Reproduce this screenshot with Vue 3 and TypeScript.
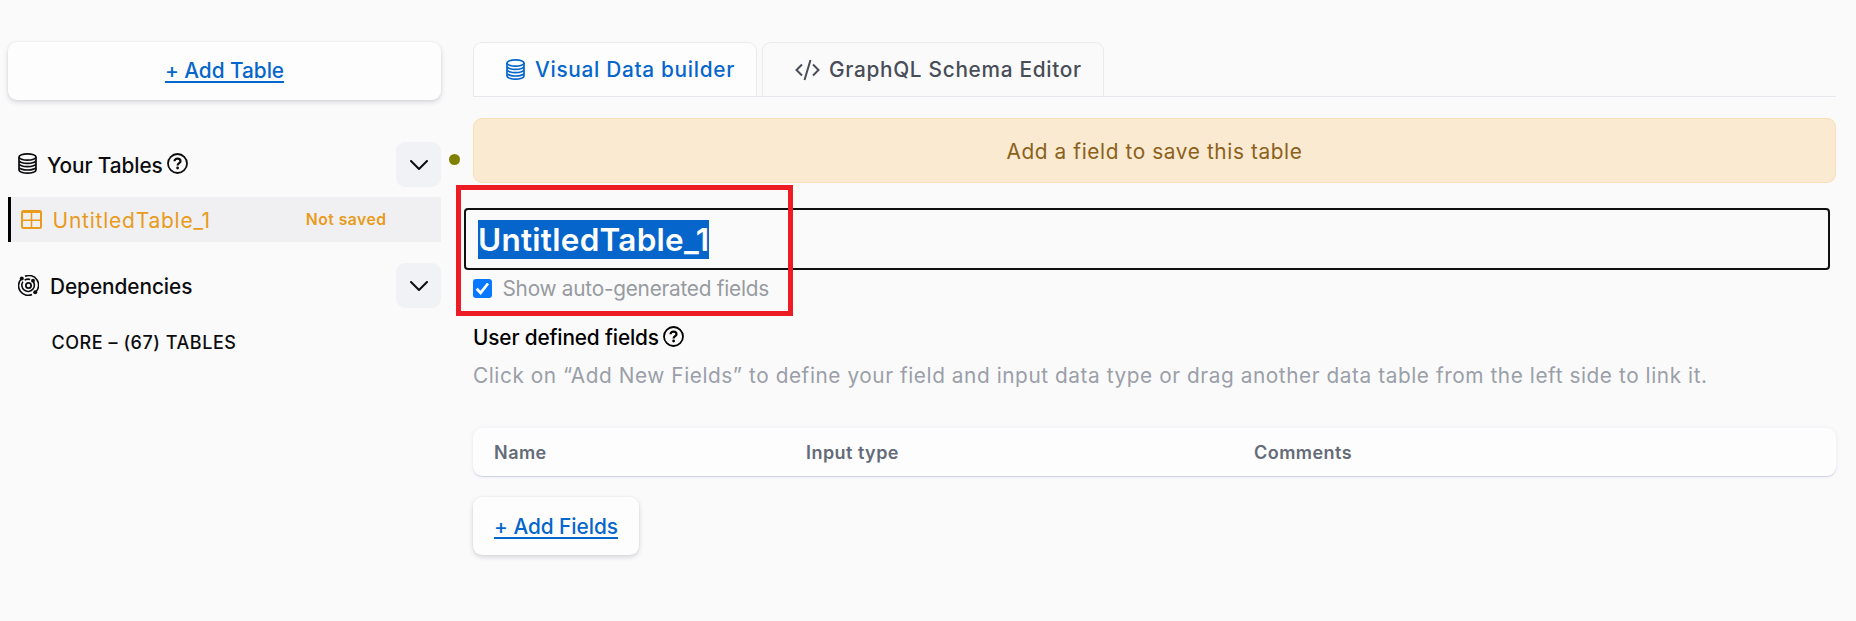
<script setup lang="ts">
import { ref } from 'vue'

const tableName = ref('UntitledTable_1')
const showAuto = ref(true)
const columns = ['Name', 'Input type', 'Comments']
</script>

<template>
  <div class="page">
    <aside class="sidebar">
      <button class="card-btn add-table"><span class="t-addtable">+ Add Table</span></button>
      <div class="group">
        <svg class="i-db" viewBox="0 0 19 21"><g fill="none" stroke="currentColor" stroke-width="1.7"><ellipse cx="9.5" cy="4" rx="8.5" ry="3.1" /><path d="M1 4v13c0 1.7 3.8 3.1 8.5 3.1S18 18.700 18 17V4M1 7.300c0 1.700 3.800 3.100 8.500 3.100S18 9 18 7.300M1 10.600c0 1.700 3.800 3.100 8.500 3.100S18 12.300 18 10.600M1 13.900c0 1.700 3.800 3.100 8.500 3.100S18 15.600 18 13.900" /></g></svg>
        <span class="label t-your">Your Tables</span>
        <svg class="i-help" viewBox="0 0 21 21"><g fill="none" stroke="currentColor"><circle cx="10.500" cy="10.500" r="9.500" stroke-width="1.800" /><path d="M7.500 8.200c0-1.700 1.300-2.500 3-2.500s3 1 3 2.500c0 1.900-2.900 2-2.900 4.200" stroke-width="2.200" /></g><circle cx="10.600" cy="15" r="1.400" fill="currentColor" /></svg>
        <button class="toggle"><svg viewBox="0 0 18 11"><path d="M1 1l8 8 8-8" fill="none" stroke="currentColor" stroke-width="2" stroke-linecap="round" stroke-linejoin="round" /></svg></button>
        <i class="dot"></i>
      </div>
      <div class="row">
        <svg class="i-table" viewBox="0 0 21 19"><g fill="none" stroke="currentColor"><rect x="1" y="1" width="19" height="17" rx="1.500" stroke-width="2" /><path d="M1 2h19" stroke-width="2" /><path d="M1 10.300h19M10.500 2v16" stroke-width="1.500" /></g></svg>
        <span class="t-row">{{ tableName }}</span>
        <span class="status t-status">Not saved</span>
      </div>
      <div class="group deps">
        <svg class="i-orbit" viewBox="0 0 21 21"><g fill="none" stroke="currentColor" stroke-width="1.600"><path d="M7 1.300A9.700 9.700 0 0 1 17.800 17M14 19.600A9.700 9.700 0 0 1 3 4.200" /><path d="M4.900 6.600a6.300 6.300 0 1 0 9.300-1.200M6.600 5.200a6.300 6.300 0 0 1 5.600-.7" /><circle cx="10.500" cy="10.500" r="2.600" stroke-width="1.800" /></g><g fill="currentColor"><circle cx="3.800" cy="3.600" r="2" /><circle cx="15" cy="5.700" r="1.900" /><circle cx="17.200" cy="17.300" r="2" /></g></svg>
        <span class="label t-deps">Dependencies</span>
        <button class="toggle"><svg viewBox="0 0 18 11"><path d="M1 1l8 8 8-8" fill="none" stroke="currentColor" stroke-width="2" stroke-linecap="round" stroke-linejoin="round" /></svg></button>
      </div>
      <div class="core"><span class="t-core">CORE – (67) TABLES</span></div>
    </aside>

    <main class="main">
      <nav class="tabs">
        <a class="tab active">
          <svg class="i-db" viewBox="0 0 19 21"><g fill="none" stroke="currentColor" stroke-width="1.700"><ellipse cx="9.500" cy="4" rx="8.500" ry="3.100" /><path d="M1 4v13c0 1.700 3.800 3.100 8.500 3.100S18 18.700 18 17V4M1 7.300c0 1.700 3.800 3.100 8.500 3.100S18 9 18 7.300M1 10.600c0 1.700 3.800 3.100 8.500 3.100S18 12.300 18 10.600M1 13.900c0 1.700 3.800 3.100 8.500 3.100S18 15.600 18 13.900" /></g></svg>
          <span class="t-visual">Visual Data builder</span>
        </a>
        <a class="tab second">
          <svg class="i-code" viewBox="0 0 25 22"><path d="M7 5.500L1.500 11 7 16.500M18 5.500l5.500 5.500-5.500 5.500M15.500 1L9.500 21" fill="none" stroke="currentColor" stroke-width="2" /></svg>
          <span class="t-gql">GraphQL Schema Editor</span>
        </a>
      </nav>
      <div class="banner"><span class="t-banner">Add a field to save this table</span></div>
      <div class="editor">
        <div class="name-input"><span class="selected t-name">{{ tableName }}</span></div>
        <label class="check">
          <span class="box" :class="{ on: showAuto }"><svg viewBox="0 0 19 19"><path d="M3.700 9.800l3.900 4L15 4.500" fill="none" stroke="#fff" stroke-width="2.800" /></svg></span>
          <span class="t-check">Show auto-generated fields</span>
        </label>
        <div class="callout"></div>
      </div>
      <h3 class="title">
        <span class="t-title">User defined fields</span>
        <svg class="i-help" viewBox="0 0 21 21"><g fill="none" stroke="currentColor"><circle cx="10.500" cy="10.500" r="9.500" stroke-width="1.800" /><path d="M7.500 8.200c0-1.700 1.300-2.500 3-2.500s3 1 3 2.500c0 1.900-2.900 2-2.900 4.200" stroke-width="2.200" /></g><circle cx="10.600" cy="15" r="1.400" fill="currentColor" /></svg>
      </h3>
      <p class="desc"><span class="t-desc">Click on “Add New Fields” to define your field and input data type or drag another data table from the left side to link it.</span></p>
      <div class="thead"><span v-for="(c, i) in columns" :key="c" :class="'c' + i">{{ c }}</span></div>
      <button class="card-btn add-fields"><span class="t-addfields">+ Add Fields</span></button>
    </main>
  </div>
</template>

<style>
body { background: #fafafb; }
</style>

<style scoped>
* { box-sizing: border-box; }
.page { display: flex; gap: 32px; height: 621px; padding: 42px 20px 0 8px; overflow: hidden; background: #fafafb; font-family: Inter, sans-serif; font-size: 20.800px; color: #0d0d0f; }
button { border: 0; padding: 0; font: inherit; color: inherit; }
svg { display: block; flex: none; }
span { white-space: nowrap; }
.sidebar { width: 433px; flex: none; }
.main { flex: 1; min-width: 0; }
.card-btn { display: flex; align-items: center; justify-content: center; height: 58px; border-radius: 9px; background: #fdfdfe; color: #0566cc; font-weight: 500; letter-spacing: -.03px; text-decoration: underline; text-decoration-thickness: 2px; text-underline-offset: 3px; box-shadow: 0 2px 5px rgba(20, 25, 40, .17), 0 0 2px rgba(20, 25, 40, .05); }
.add-table { width: 100%; padding-bottom: 1px; }
.group { position: relative; display: flex; align-items: center; height: 45px; margin-top: 42px; padding-left: 10px; }
.group .i-db { margin-top: -2px; }
.label { margin-left: 11px; padding-top: 1px; font-weight: 500; }
.t-your { margin-left: 10px; letter-spacing: -.1px; }
.t-deps { letter-spacing: -.06px; }
.i-db { width: 19px; height: 21px; }
.i-help { width: 21px; height: 21px; margin-left: 5px; }
.group .i-help { margin: -2px 0 0 4px; }
.toggle { display: flex; align-items: center; justify-content: center; width: 45px; height: 45px; margin-left: auto; border-radius: 9px; background: #f1f2f6; }
.toggle svg { width: 18px; height: 11px; margin-top: 1px; }
.dot { position: absolute; left: 441px; top: 12px; width: 11px; height: 11px; border-radius: 50%; background: #808000; }
.row { display: flex; align-items: center; height: 45px; margin-top: 10px; padding-left: 10px; border-left: 3px solid #000; background: #f0f0f2; color: #e89b1c; }
.i-table { width: 21px; height: 19px; margin-right: 10.500px; }
.t-row { padding-top: 1px; font-size: 21px; letter-spacing: .76px; }
.status { margin: 0 54.500px 0 auto; font-size: 15.750px; font-weight: 600; letter-spacing: .46px; }
.deps { margin-top: 21px; }
.i-orbit { width: 21px; height: 21px; }
.core { display: flex; align-items: center; height: 24px; margin: 22px 0 0 43.500px; font-size: 18px; font-weight: 500; letter-spacing: .54px; }
.tabs { display: flex; gap: 5px; height: 55px; border-bottom: 1px solid #e5e9ee; }
.tab { display: flex; align-items: center; height: 54px; padding-left: 32px; border: 1px solid #e8eaee; border-bottom: 0; border-radius: 9px 9px 0 0; font-weight: 550; letter-spacing: .7px; color: #484d57; width: 284px; }
.active { background: #fdfdfe; color: #0566cc; }
.tab .i-db { margin-right: 10px; margin-top: -1px; }
.second { width: 342px; }
.i-code { width: 25px; height: 22px; margin-right: 9px; }
.banner { display: flex; align-items: center; justify-content: center; height: 65px; margin-top: 21px; padding-top: 1px; border: 1px solid #f8dfb6; border-radius: 9px; background: #f9ead1; color: #8c601a; letter-spacing: .61px; }
.editor { position: relative; padding-top: 25px; }
.name-input { display: flex; align-items: center; height: 62px; margin: 0 6px 0 -9px; padding-left: 12px; border: 2px solid #101012; border-radius: 4px; font-size: 31.500px; font-weight: 600; }
.selected { height: 39px; line-height: 39px; background: #0565cb; color: #fff; letter-spacing: .26px; }
.check { display: flex; align-items: center; height: 37px; color: #979ba0; letter-spacing: -.25px; }
.box { width: 19px; height: 19px; margin-right: 10.500px; border-radius: 3px; }
.on { background: #0778ff; }
.callout { position: absolute; left: -17px; top: 2px; width: 337px; height: 131px; border: 5px solid #ed1c24; }
.title { display: flex; align-items: center; height: 24px; margin: 18px 0 0; font-size: inherit; font-weight: 500; letter-spacing: -.14px; color: #000; }
.title .i-help { margin: -2px 0 0 4px; }
.desc { display: flex; align-items: center; height: 30px; margin: 11px 0 0; color: #9a9fa8; letter-spacing: .565px; }
.thead { display: grid; grid-template-columns: 312px 448px 1fr; align-items: center; height: 48px; margin-top: 38px; padding-left: 21px; border-radius: 9px; background: #fdfdfe; box-shadow: 0 1px 1px #cfd3e2, 0 0 5px rgba(60, 70, 110, .07); color: #646b78; font-size: 18px; font-weight: 600; letter-spacing: .46px; }
.add-fields { width: 166px; margin-top: 21px; }
</style>
